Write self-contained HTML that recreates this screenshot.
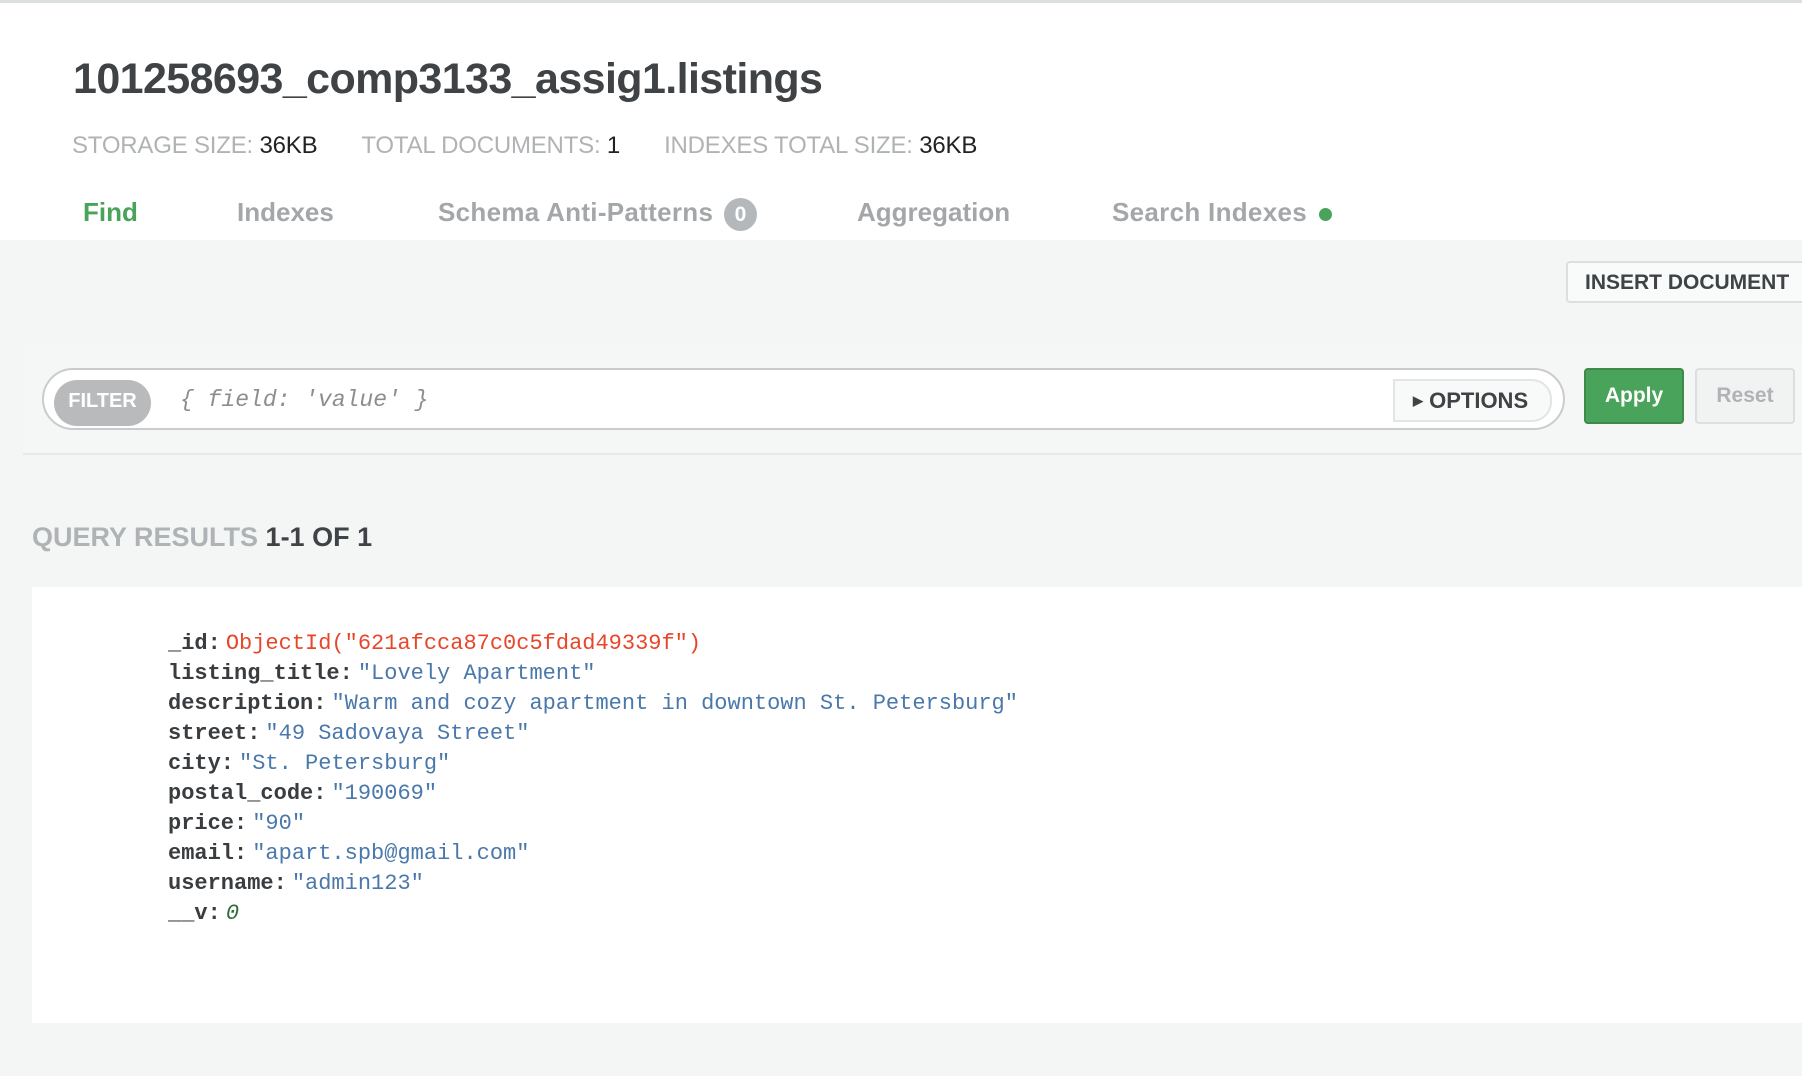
<!DOCTYPE html>
<html><head><meta charset="utf-8"><style>
*{margin:0;padding:0;box-sizing:border-box}
body{width:1802px;height:1076px;overflow:hidden;background:#fff;font-family:"Liberation Sans",Arial,sans-serif;position:relative}
.a{position:absolute;white-space:nowrap}
.mono{font-family:"Liberation Mono",monospace}
.mono b{margin-right:5px}
</style></head><body>
<div class="a" style="left:0;top:0;width:1802px;height:3px;background:#dcdfe0"></div>
<div class="a" style="left:73px;top:55px;font-size:43px;font-weight:bold;color:#3f4346;letter-spacing:-0.6px">101258693_comp3133_assig1.listings</div>
<div class="a" style="left:72px;top:132px;font-size:24px;color:#b0b3b5;letter-spacing:-0.2px">STORAGE SIZE: <span style="color:#222">36KB</span><span style="display:inline-block;width:44px"></span>TOTAL DOCUMENTS: <span style="color:#222">1</span><span style="display:inline-block;width:44px"></span>INDEXES TOTAL SIZE: <span style="color:#222">36KB</span></div>
<div class="a" style="left:83px;top:197px;font-size:26px;font-weight:bold;color:#4aa35a">Find</div>
<div class="a" style="left:237px;top:197px;font-size:26px;font-weight:bold;color:#a4a7a9">Indexes</div>
<div class="a" style="left:438px;top:197px;font-size:26px;font-weight:bold;color:#a4a7a9;letter-spacing:0.3px">Schema Anti-Patterns</div>
<div class="a" style="left:724px;top:198px;width:33px;height:33px;border-radius:50%;background:#b5b8ba;color:#fff;font-size:21px;font-weight:bold;text-align:center;line-height:33px">0</div>
<div class="a" style="left:857px;top:197px;font-size:26px;font-weight:bold;color:#a4a7a9">Aggregation</div>
<div class="a" style="left:1112px;top:197px;font-size:26px;font-weight:bold;color:#a4a7a9;letter-spacing:0.3px">Search Indexes</div>
<div class="a" style="left:1319px;top:208px;width:13px;height:13px;border-radius:50%;background:#4aa35a"></div>

<div class="a" style="left:0;top:240px;width:1802px;height:836px;background:#f4f5f5"></div>
<div class="a" style="left:1566px;top:261px;width:260px;height:42px;background:#f9fafa;border:2px solid #dcdedf;border-radius:4px;font-size:21px;font-weight:bold;color:#3f4346;line-height:40px;padding-left:17px">INSERT DOCUMENT</div>

<div class="a" style="left:23px;top:345px;width:1779px;height:110px;background:#f5f6f6;border-bottom:2px solid #e6e8e9"></div>
<div class="a" style="left:42px;top:368px;width:1523px;height:62px;background:#fff;border:2px solid #c9cbcc;border-radius:31px"></div>
<div class="a" style="left:54px;top:380px;width:97px;height:46px;background:#b8babb;border-radius:23px;color:#fff;font-size:20px;font-weight:bold;line-height:42px;text-align:center">FILTER</div>
<div class="a mono" style="left:180px;top:387px;font-size:23px;font-style:italic;color:#8b8e90">{ field: 'value' }</div>
<div class="a" style="left:1393px;top:379px;width:159px;height:43px;background:#f8f9f9;border:2px solid #e2e4e5;border-radius:0 20px 20px 0;font-size:22px;font-weight:bold;color:#3f4346;line-height:40px;padding-left:18px"><span style="font-size:13px;position:relative;top:-3px">&#9654;</span> OPTIONS</div>
<div class="a" style="left:1584px;top:368px;width:100px;height:56px;background:#4aa35a;border:2px solid #3d8a4b;border-radius:4px;color:#fff;font-size:21px;font-weight:bold;line-height:52px;text-align:center">Apply</div>
<div class="a" style="left:1695px;top:368px;width:100px;height:56px;background:#f1f2f2;border:2px solid #dcdedf;border-radius:4px;color:#b0b3b5;font-size:21px;font-weight:bold;line-height:52px;text-align:center">Reset</div>

<div class="a" style="left:32px;top:522px;font-size:27px;font-weight:bold;color:#b0b3b5">QUERY RESULTS <span style="color:#3f4346">1-1 OF 1</span></div>
<div class="a" style="left:32px;top:587px;width:1770px;height:436px;background:#fff"></div>
<div class="a mono" style="left:168px;top:629px;font-size:22px;line-height:30px;color:#3a3d40">
<div><b>_id:</b><span style="color:#e8462a">ObjectId("621afcca87c0c5fdad49339f")</span></div>
<div><b>listing_title:</b><span style="color:#4a78ab">"Lovely Apartment"</span></div>
<div><b>description:</b><span style="color:#4a78ab">"Warm and cozy apartment in downtown St. Petersburg"</span></div>
<div><b>street:</b><span style="color:#4a78ab">"49 Sadovaya Street"</span></div>
<div><b>city:</b><span style="color:#4a78ab">"St. Petersburg"</span></div>
<div><b>postal_code:</b><span style="color:#4a78ab">"190069"</span></div>
<div><b>price:</b><span style="color:#4a78ab">"90"</span></div>
<div><b>email:</b><span style="color:#4a78ab">"apart.spb@gmail.com"</span></div>
<div><b>username:</b><span style="color:#4a78ab">"admin123"</span></div>
<div><b>__v:</b><span style="color:#2d6e3a;font-style:italic">0</span></div>
</div>
</body></html>
